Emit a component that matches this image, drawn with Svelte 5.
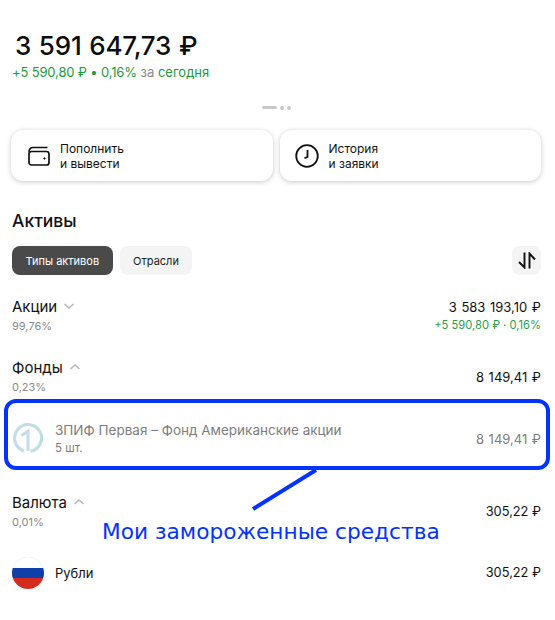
<script lang="ts">
	const groups = [
		{ name: 'Акции', share: '99,76%', value: '3 583 193,10 ₽', change: '+5 590,80 ₽ · 0,16%', open: false },
		{ name: 'Фонды', share: '0,23%', value: '8 149,41 ₽', open: true }
	];
</script>

{#snippet chevron(open)}
	<svg class="chevron" width="12" height="8" viewBox="0 0 12 8" fill="none">
		<path d={open ? 'M1.5 6L6 2l4.500 4' : 'M1.500 2L6 6l4.500-4'} stroke="#b8b8b8" stroke-width="1.600" />
	</svg>
{/snippet}

<main class="page">
	<header class="total">
		<h1>3 591 647,73 ₽</h1>
		<p class="today"><span class="green tight">+5 590,80 ₽ • 0,16%</span> <span class="muted">за</span> <span class="green">сегодня</span></p>
	</header>

	<div class="pager"><i class="dash"></i><i></i><i></i></div>

	<section class="actions">
		<button class="action">
			<svg width="24" height="20" viewBox="-1 0 24 20" fill="none" stroke="#111" stroke-width="1.700">
				<path d="M19.500 1.500H5C2.500 1.500 1 3 1 6.500" />
				<rect x="1" y="5.500" width="20" height="13.500" rx="2.500" />
				<circle cx="16.500" cy="12.500" r="0.700" fill="#111" stroke-width="1" />
			</svg>
			<span>Пополнить<br />и вывести</span>
		</button>
		<button class="action">
			<svg class="clock" width="24" height="24" viewBox="0 0 24 24" fill="none" stroke="#111" stroke-width="1.800">
				<circle cx="12" cy="12" r="10.800" />
				<path d="M12.500 6v7l-3 1.200" />
			</svg>
			<span>История<br />и заявки</span>
		</button>
	</section>

	<h2>Активы</h2>

	<div class="tabs">
		<button class="tab active">Типы активов</button>
		<button class="tab">Отрасли</button>
		<button class="sort" aria-label="Сортировка">
			<svg width="18" height="17" viewBox="0 0 18 17" fill="none" stroke="#111" stroke-width="1.900">
				<path d="M6.500 0.500V15.500L1 10" />
				<path d="M11.500 16.500V1.500L17 7.500" />
			</svg>
		</button>
	</div>

	{#each groups as g}
		<div class="group" class:open={g.open}>
			<div>
				<div class="name">{g.name} {@render chevron(g.open)}</div>
				<div class="share">{g.share}</div>
			</div>
			<div class="right">
				<div class="value">{g.value}</div>
				{#if g.change}<div class="change">{g.change}</div>{/if}
			</div>
		</div>
	{/each}

	<div class="item fund">
		<svg class="logo" width="32" height="32" viewBox="0 0 32 32" fill="none">
			<defs>
				<linearGradient id="ring" x1="0" y1="0" x2="1" y2="0">
					<stop offset="0" stop-color="#c6dcec" />
					<stop offset="1" stop-color="#bddfe0" />
				</linearGradient>
			</defs>
			<path d="M18.500 29.300A13.500 13.500 0 1 0 12 28.900" stroke="url(#ring)" stroke-width="3.200" />
			<path d="M9.500 13.500l6.500-4.500v20" stroke="#c6dcec" stroke-width="3" />
		</svg>
		<div class="info">
			<div class="fund-name">ЗПИФ Первая – Фонд Американские акции</div>
			<div class="count">5 шт.</div>
		</div>
		<div class="value">8 149,41 ₽</div>
	</div>

	<div class="group currency">
		<div>
			<div class="name">Валюта {@render chevron(true)}</div>
			<div class="share">0,01%</div>
		</div>
		<div class="value">305,22 ₽</div>
	</div>

	<div class="item rub">
		<div class="flag"><i></i><i></i><i></i></div>
		<div class="info">Рубли</div>
		<div class="value">305,22 ₽</div>
	</div>

	<!-- annotation drawn over the screenshot -->
	<div class="frame"></div>
	<svg class="pointer" width="70" height="44" viewBox="0 0 70 44">
		<path d="M66 1L3 40" stroke="#0433ff" stroke-width="4" />
	</svg>
	<div class="note">Мои замороженные средства</div>
</main>

<style>
	:global(body) {
		margin: 0;
		background: #fff;
	}

	.page {
		position: relative;
		width: 555px;
		height: 620px;
		box-sizing: border-box;
		padding: 0 14px 0 12px;
		overflow: hidden;
		font-family: Inter, 'Noto Sans', sans-serif;
		color: #111;
	}

	h1 {
		margin: 0;
		padding: 29px 0 0 3px;
		font-size: 26px;
		line-height: 33px;
		letter-spacing: -0.2px;
		word-spacing: 1px;
		font-weight: 500;
		color: #0d0d0d;
	}

	.today {
		margin: 2px 0 0;
		font-size: 13px;
		line-height: 17px;
	}

	.green {
		color: #1a9a3e;
	}

	.tight {
		letter-spacing: -0.15px;
	}

	.muted {
		color: #8a8a8a;
	}

	.pager {
		display: flex;
		justify-content: center;
		gap: 3px;
		margin-top: 25px;
		height: 3px;
	}

	.pager i {
		width: 4px;
		height: 4px;
		border-radius: 50%;
		background: #c8c8c8;
	}

	.pager .dash {
		width: 15px;
		height: 3px;
		border-radius: 2px;
	}

	.actions {
		display: grid;
		grid-template-columns: 1fr 1fr;
		gap: 7px;
		margin: 21px 0 0 -1px;
	}

	.action {
		display: grid;
		grid-template-columns: 33px 1fr;
		align-items: center;
		height: 51px;
		padding: 0 0 0 16px;
		border: 0;
		border-radius: 12px;
		background: #fff;
		box-shadow: 0 1px 5px rgba(0, 0, 0, 0.22);
		font: inherit;
		font-size: 12px;
		line-height: 15px;
		color: #111;
		text-align: left;
	}

	.clock {
		margin-left: -1px;
	}

	h2 {
		margin: 30px 0 0;
		font-size: 17.500px;
		line-height: 20px;
		font-weight: 500;
	}

	.tabs {
		display: flex;
		gap: 7px;
		margin-top: 15px;
	}

	.tab {
		height: 29px;
		padding: 0 13.500px;
		border: 0;
		border-radius: 8px;
		background: #f4f4f4;
		font: inherit;
		font-size: 11px;
		color: #222;
	}

	.tab.active {
		background: #4a4a4a;
		color: #fff;
	}

	.sort {
		display: flex;
		align-items: center;
		justify-content: center;
		width: 29px;
		height: 29px;
		margin-left: auto;
		padding: 0;
		border: 0;
		border-radius: 8px;
		background: #f4f4f4;
	}

	.group {
		display: flex;
		justify-content: space-between;
		align-items: flex-start;
		height: 61px;
	}

	.tabs + .group {
		margin-top: 22px;
	}

	.group.open {
		height: 49px;
	}

	.group.open .value,
	.currency > .value {
		margin-top: 9px;
	}

	.name {
		font-size: 15px;
		line-height: 20px;
		font-weight: 400;
	}

	.chevron {
		margin-left: 2px;
		vertical-align: 2px;
	}

	.share {
		margin-top: 2px;
		font-size: 11px;
		line-height: 15px;
		color: #8a8a8a;
	}

	.right {
		text-align: right;
	}

	.value {
		font-size: 13px;
		line-height: 20px;
		word-spacing: 1px;
	}

	.currency > .value,
	.rub .value {
		font-size: 12.800px;
		word-spacing: 0;
	}

	.change {
		font-size: 11.200px;
		line-height: 16px;
		color: #2a9d4a;
	}

	.item {
		display: flex;
		align-items: center;
	}

	.fund {
		height: 62px;
		color: #7d7d7d;
	}

	.fund .info {
		margin-top: 2px;
	}

	.fund .value {
		margin-top: 1px;
	}

	.logo {
		flex: none;
		width: 32px;
		height: 32px;
	}

	.info {
		flex: 1;
		margin-left: 11px;
		font-size: 13px;
	}

	.fund-name {
		font-size: 13.500px;
		line-height: 17px;
	}

	.count {
		margin-top: 1px;
		font-size: 11.500px;
		line-height: 17px;
	}

	.currency {
		height: 64px;
		margin-top: 24px;
	}

	.rub .info {
		color: #111;
	}

	.flag {
		display: flex;
		flex-direction: column;
		flex: none;
		width: 32px;
		height: 32px;
		border-radius: 50%;
		overflow: hidden;
		box-shadow: inset 0 0 1px rgba(0, 0, 0, 0.2);
	}

	.flag i {
		flex: 1;
	}

	.flag i:nth-child(1) {
		background: transparent;
	}

	.flag i:nth-child(2) {
		background: #0f3fa8;
	}

	.flag i:nth-child(3) {
		background: #d52b1e;
	}

	.frame {
		position: absolute;
		left: 4px;
		top: 399px;
		width: 538px;
		height: 63px;
		border: 4px solid #0433ff;
		border-radius: 12px;
	}

	.pointer {
		position: absolute;
		left: 250px;
		top: 469px;
	}

	.note {
		position: absolute;
		left: 102px;
		top: 517px;
		font-family: 'DejaVu Sans', sans-serif;
		font-size: 21.700px;
		line-height: 30px;
		color: #0433ff;
		white-space: nowrap;
	}
</style>
